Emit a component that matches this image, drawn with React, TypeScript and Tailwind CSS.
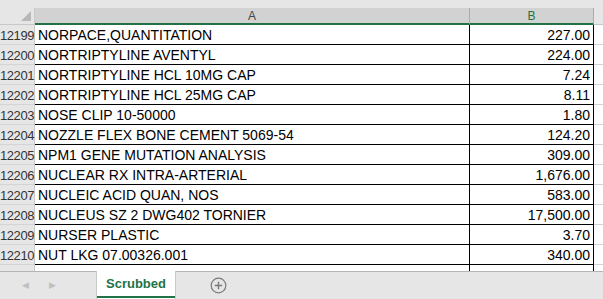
import React from "react";

const rows: [string, string, string][] = [
  ["12199", "NORPACE,QUANTITATION", "227.00"],
  ["12200", "NORTRIPTYLINE AVENTYL", "224.00"],
  ["12201", "NORTRIPTYLINE HCL 10MG CAP", "7.24"],
  ["12202", "NORTRIPTYLINE HCL 25MG CAP", "8.11"],
  ["12203", "NOSE CLIP 10-50000", "1.80"],
  ["12204", "NOZZLE FLEX BONE CEMENT 5069-54", "124.20"],
  ["12205", "NPM1 GENE MUTATION ANALYSIS", "309.00"],
  ["12206", "NUCLEAR RX INTRA-ARTERIAL", "1,676.00"],
  ["12207", "NUCLEIC ACID QUAN, NOS", "583.00"],
  ["12208", "NUCLEUS SZ 2 DWG402 TORNIER", "17,500.00"],
  ["12209", "NURSER PLASTIC", "3.70"],
  ["12210", "NUT LKG 07.00326.001", "340.00"],
];

export default function App() {
  return (
    <div
      className="w-[603px] h-[299px] overflow-hidden bg-white flex flex-col text-[14px] text-[#000]"
      style={{ fontFamily: '"Liberation Sans", Arial, sans-serif' }}
    >
      <div className="h-[8px] bg-[#e6e6e6] shrink-0" />
      {/* header */}
      <div className="flex h-[17px] shrink-0">
        <div className="w-[35px] bg-[#e6e6e6] border-r border-[#c8c8c8] border-b border-b-[#c8c8c8] relative">
          <div className="absolute right-[3px] bottom-[3px] w-0 h-0 border-l-[10px] border-l-transparent border-b-[10px] border-b-[#b7b7b7]" />
        </div>
        <div className="w-[435px] bg-[#d2d2d2] border-b-2 border-[#217346] border-r border-r-[#ababab] flex items-center justify-center text-[#444] text-[12px] leading-none">
          A
        </div>
        <div className="w-[124px] bg-[#d2d2d2] border-b-2 border-[#217346] border-r border-r-[#ababab] flex items-center justify-center text-[#217346] text-[12px] leading-none">
          B
        </div>
        <div className="flex-1 bg-[#e6e6e6] border-b border-[#c8c8c8]" />
      </div>
      {/* rows */}
      {rows.map(([n, a, b]) => (
        <div key={n} className="flex h-[20px] shrink-0">
          <div className="w-[35px] bg-[#e6e6e6] border-r border-[#c8c8c8] border-b border-b-[#d4d4d4] flex items-end justify-center text-[#333] text-[13px] pb-[2px] leading-none tracking-[-0.4px]">
            {n}
          </div>
          <div className="w-[435px] border-r border-b border-black flex items-end pl-[3px] pb-[2px] leading-none whitespace-nowrap overflow-hidden">
            {a}
          </div>
          <div className="w-[124px] border-r border-b border-black flex items-end justify-end pr-[3px] pb-[2px] leading-none">
            {b}
          </div>
          <div className="flex-1 border-b border-[#d4d4d4]" />
        </div>
      ))}
      <div className="flex h-[6px] shrink-0">
        <div className="w-[35px] bg-[#e6e6e6] border-r border-[#c8c8c8]" />
        <div className="w-[435px] border-r border-black" />
        <div className="w-[124px] border-r border-black" />
        <div className="flex-1" />
      </div>
      {/* tab bar */}
      <div className="flex-1 bg-[#e6e6e6] border-t border-[#b4b4b4] flex items-stretch">
        <div className="w-[96px] flex items-center text-[#c0c0c0] text-[9px]">
          <span className="ml-[22px]">◀</span>
          <span className="ml-[20px]">▶</span>
        </div>
        <div className="-mt-px w-[80px] bg-white border-l border-r border-[#c8c8c8] flex flex-col">
          <div className="flex-1 flex items-center justify-center font-bold text-[#217346] text-[13px]">
            Scrubbed
          </div>
          <div className="h-[2px] bg-[#217346] mb-[1px]" />
        </div>
        <div className="ml-[34px] flex items-center">
          <svg width="17" height="17" viewBox="0 0 17 17">
            <circle cx="8.5" cy="8.5" r="7.3" fill="none" stroke="#7a7a7a" strokeWidth="1.2" />
            <path d="M8.5 4.8v7.4M4.8 8.5h7.4" stroke="#7a7a7a" strokeWidth="1.4" />
          </svg>
        </div>
      </div>
    </div>
  );
}
